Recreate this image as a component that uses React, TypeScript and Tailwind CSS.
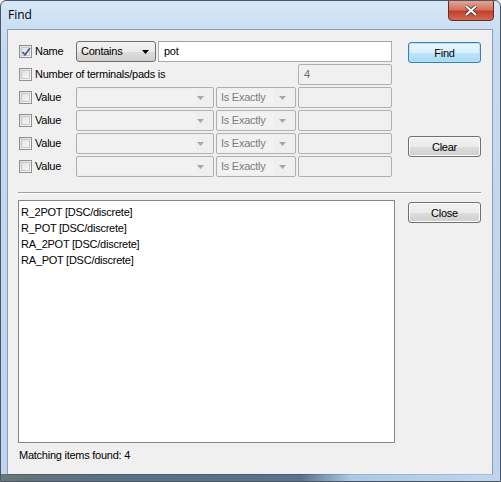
import type { ReactNode } from "react";

const ui = "font-['Liberation_Sans',Arial,sans-serif] text-[11px] tracking-[-0.25px] text-black";

function CheckBox({ checked = false }: { checked?: boolean }) {
  return (
    <span className="relative ml-[1px] flex h-[13px] w-[13px] shrink-0 items-center justify-center border border-[#8e8f8f] bg-[linear-gradient(135deg,#dcdcdc,#fbfbfb)]">
      <span className="h-[9px] w-[9px] border border-[#c8c8c8] bg-[linear-gradient(135deg,#e2e2e2,#f6f6f6)]" />
      {checked ? (
        <svg className="absolute left-[1px] top-[1px]" width="10" height="10" viewBox="0 0 10 10">
          <path d="M1.5 5 L4 7.8 L8.8 1.2" fill="none" stroke="#4a5d9a" strokeWidth="1.8" />
        </svg>
      ) : null}
    </span>
  );
}

function Arrow({ color }: { color: string }) {
  return (
    <svg width="7" height="4" viewBox="0 0 7 4" className="shrink-0">
      <path d="M0 0 H7 L3.5 4 Z" fill={color} />
    </svg>
  );
}

function DisabledCombo({ width, text, inner }: { width: string; text?: string; inner?: string }) {
  return (
    <div className={`${width} flex h-full items-center rounded-[2px] border border-[#b0b0b0] bg-[#efefef] pr-[9px]`}>
      <div className={`${inner ?? "flex-1"} ml-[1px] flex h-[15px] items-center whitespace-nowrap bg-[#f2f2f2] pl-[3px] text-[#7c7c7c]`}>
        {text}
      </div>
      <div className="flex-1" />
      <Arrow color="#a7a7a7" />
    </div>
  );
}

function Box({ width, children, white }: { width: string; children?: ReactNode; white?: boolean }) {
  return (
    <div
      className={`${width} flex h-full items-center pl-[5px] ${
        white ? "border border-[#abadb3] border-t-[#a0a2a8] bg-white" : "rounded-[2px] border border-[#b0b0b0] bg-[#f0f0f0] text-[#6d6d6d]"
      }`}
    >
      {children}
    </div>
  );
}

function Btn({ label, focused }: { label: string; focused?: boolean }) {
  return (
    <div
      className={`flex h-[21px] w-[73px] items-center justify-center rounded-[3px] border pt-[1px] ${
        focused
          ? "border-[#3c7fb1] bg-[linear-gradient(#eaf6fd_0%,#d9f0fc_50%,#bee6fd_51%,#a7d9f5_100%)] shadow-[inset_0_0_0_1px_#aee3fb]"
          : "border-[#707070] bg-[linear-gradient(#f2f2f2_0%,#ebebeb_50%,#dddddd_51%,#cfcfcf_100%)] shadow-[inset_0_0_0_1px_#fbfbfb]"
      }`}
    >
      {label}
    </div>
  );
}

function Label({ checked, text }: { checked?: boolean; text: string }) {
  return (
    <div className="flex w-[58px] shrink-0 items-center gap-[3px]">
      <CheckBox checked={checked} />
      <span className="whitespace-nowrap">{text}</span>
    </div>
  );
}

const items = ["R_2POT [DSC/discrete]", "R_POT [DSC/discrete]", "RA_2POT [DSC/discrete]", "RA_POT [DSC/discrete]"];

export default function App() {
  return (
    <div className="relative h-[482px] w-[501px] overflow-hidden rounded-t-[6px] border border-[#4b5563] bg-[linear-gradient(180deg,#d6e6f6_0%,#c4daf0_10%,#bcd4ec_100%)]">
      {/* title bar */}
      <div className="flex h-[28px] items-center pb-[1px] pl-[7px] font-['Open_Sans',sans-serif] text-[12px] text-black">
        Find
      </div>
      <div className="absolute right-[6px] top-[-1px] flex h-[21px] w-[46px] items-center justify-center rounded-b-[4px] border border-[#6b2b22] bg-[linear-gradient(#e5a493_0%,#d2725f_45%,#c4402b_55%,#d06a55_100%)]">
        <svg width="14" height="11" viewBox="0 0 14 11">
          <path d="M2 1 L12 10 M12 1 L2 10" stroke="#3a2a2a" strokeWidth="3.6" />
          <path d="M2 1 L12 10 M12 1 L2 10" stroke="#ffffff" strokeWidth="2.2" />
        </svg>
      </div>

      {/* client */}
      <div className={`ml-[6px] flex h-[446px] w-[486px] flex-col border border-[#8b9db2] bg-[#f0f0f0] pl-[10px] pr-[11px] pt-[11px] ${ui}`}>
        <div className="flex">
          <div className="flex w-[374px] flex-col gap-[2px]">
            <div className="flex h-[21px] items-center">
              <Label checked text="Name" />
              <div className="flex h-full w-[80px] items-center justify-between rounded-[3px] border border-[#707070] bg-[linear-gradient(#f2f2f2_0%,#ebebeb_50%,#dddddd_51%,#cfcfcf_100%)] pl-[4px] pr-[6px]">
                <span>Contains</span>
                <Arrow color="#000" />
              </div>
              <div className="ml-[2px] h-full">
                <Box width="w-[234px]" white>pot</Box>
              </div>
            </div>
            <div className="flex h-[21px] items-center">
              <div className="flex items-center gap-[3px]">
                <CheckBox />
                <span>Number of terminals/pads is</span>
              </div>
              <div className="ml-auto h-full">
                <Box width="w-[94px]">4</Box>
              </div>
            </div>
            {[0, 1, 2, 3].map((i) => (
              <div key={i} className="flex h-[21px] items-center gap-[2px]">
                <Label text="Value" />
                <div className="-ml-[2px] h-full">
                  <DisabledCombo width="w-[138px]" inner="w-[118px] flex-none" />
                </div>
                <div className="h-full">
                  <DisabledCombo width="w-[80px]" text="Is Exactly" inner="w-[56px] flex-none" />
                </div>
                <div className="h-full">
                  <Box width="w-[94px]" />
                </div>
              </div>
            ))}
          </div>
          <div className="ml-[16px] flex flex-col pt-[1px]">
            <Btn label="Find" focused />
            <div className="mt-[73px]">
              <Btn label="Clear" />
            </div>
          </div>
        </div>

        <div className="mt-[15px] h-[2px] w-[463px] border-b border-t border-b-white border-t-[#a0a0a0]" />

        <div className="mt-[6px] flex">
          <div className="h-[243px] w-[377px] border border-[#828790] bg-white pl-[2px] pt-[3px]">
            {items.map((t) => (
              <div key={t} className="h-[16px] leading-[16px]">
                {t}
              </div>
            ))}
          </div>
          <div className="ml-[13px] pt-[2px]">
            <Btn label="Close" />
          </div>
        </div>

        <div className="mt-[6px] pl-[1px] leading-[13px]">Matching items found: 4</div>
      </div>

      {/* bottom frame strip showing desktop behind */}
      <div className="absolute bottom-0 left-0 h-[7px] w-full bg-[linear-gradient(90deg,#2c3a2a_0%,#1a2c40_20%,#1a3048_60%,#9fc0e0_70%,#c2d8ee_100%)] opacity-60" />
    </div>
  );
}
